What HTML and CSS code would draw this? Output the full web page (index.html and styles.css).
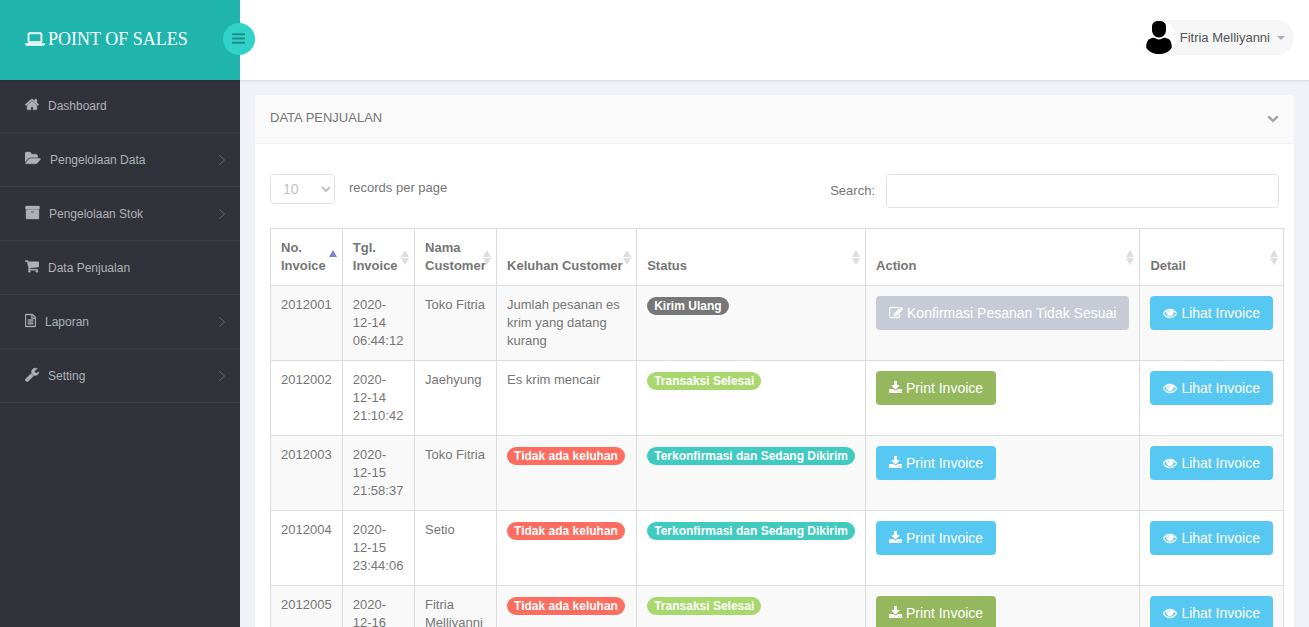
FILE: index.html
```html
<!DOCTYPE html>
<html lang="id">
<head>
  <meta charset="UTF-8" />
  <meta name="viewport" content="width=device-width, initial-scale=1" />
  <title>Point Of Sales - Data Penjualan</title>
  <link rel="stylesheet" href="styles.css">
</head>
<body>
  <!-- Icon set -->
  <svg class="icon-set" aria-hidden="true">
    <symbol id="laptop" viewBox="0 0 1920 1792"><path d="M416 1280q-66 0-113-47t-47-113v-704q0-66 47-113t113-47h1088q66 0 113 47t47 113v704q0 66-47 113t-113 47h-1088zm-32-864v704q0 13 9.500 22.500t22.500 9.500h1088q13 0 22.500-9.500t9.500-22.500v-704q0-13-9.500-22.500t-22.500-9.500h-1088q-13 0-22.500 9.500t-9.500 22.500zm1376 928h160v96q0 40-47 68t-113 28h-1600q-66 0-113-28t-47-68v-96h1760z"/></symbol>
    <symbol id="bars" viewBox="0 0 1792 1792"><path d="M1664 1344v128q0 26-19 45t-45 19h-1408q-26 0-45-19t-19-45v-128q0-26 19-45t45-19h1408q26 0 45 19t19 45zm0-512v128q0 26-19 45t-45 19h-1408q-26 0-45-19t-19-45v-128q0-26 19-45t45-19h1408q26 0 45 19t19 45zm0-512v128q0 26-19 45t-45 19h-1408q-26 0-45-19t-19-45v-128q0-26 19-45t45-19h1408q26 0 45 19t19 45z"/></symbol>
    <symbol id="home" viewBox="64 0 1664 1792"><path d="M1472 992v480q0 26-19 45t-45 19h-384v-384h-256v384h-384q-26 0-45-19t-19-45v-480q0-1 .5-3t.5-3l575-474 575 474q1 2 1 6zm223-69l-62 74q-8 9-21 11h-3q-13 0-21-7l-692-577-692 577q-12 8-24 7-13-2-21-11l-62-74q-8-10-7-23.500t11-21.500l719-599q32-26 76-26t76 26l244 204v-195q0-14 9-23t23-9h192q14 0 23 9t9 23v408l219 182q10 8 11 21.500t-7 23.500z"/></symbol>
    <symbol id="folder" viewBox="0 0 1815 1792"><path d="M1815 952q0 31-31 66l-336 396q-43 51-120.500 86.500t-143.500 35.500h-1088q-34 0-60.500-13t-26.500-43q0-31 31-66l336-396q43-51 120.500-86.500t143.500-35.500h1088q34 0 60.500 13t26.500 43zm-343-344v160h-832q-94 0-197 47.500t-164 119.500l-337 396-5 6q0-4-.5-12.500t-.5-12.500v-960q0-92 66-158t158-66h320q92 0 158 66t66 158v32h544q92 0 158 66t66 158z"/></symbol>
    <symbol id="archive" viewBox="64 0 1664 1792"><path d="M1088 832q0-26-19-45t-45-19h-256q-26 0-45 19t-19 45 19 45 45 19h256q26 0 45-19t19-45zm576-192v960q0 26-19 45t-45 19h-1408q-26 0-45-19t-19-45v-960q0-26 19-45t45-19h1408q26 0 45 19t19 45zm64-448v256q0 26-19 45t-45 19h-1536q-26 0-45-19t-19-45v-256q0-26 19-45t45-19h1536q26 0 45 19t19 45z"/></symbol>
    <symbol id="cart" viewBox="64 64 1664 1792"><path d="M704 1536q0 52-38 90t-90 38-90-38-38-90 38-90 90-38 90 38 38 90zm896 0q0 52-38 90t-90 38-90-38-38-90 38-90 90-38 90 38 38 90zm128-1088v512q0 24-16.500 42.500t-40.500 21.500l-1044 122q13 60 13 70 0 16-24 64h920q26 0 45 19t19 45-19 45-45 19h-1024q-26 0-45-19t-19-45q0-11 8-31.500t16-36 21.500-40 15.500-29.500l-177-823h-204q-26 0-45-19t-19-45 19-45 45-19h256q16 0 28.500 6.500t19.500 15.500 13 24.500 8 26 5.500 29.500 4.500 26h1201q26 0 45 19t19 45z"/></symbol>
    <symbol id="file" viewBox="128 0 1536 1792"><path d="M1596 380q28 28 48 76t20 88v1152q0 40-28 68t-68 28h-1344q-40 0-68-28t-28-68v-1600q0-40 28-68t68-28h896q40 0 88 20t76 48zm-444-244v376h376q-10-29-22-41l-313-313q-12-12-41-22zm384 1528v-1024h-416q-40 0-68-28t-28-68v-416h-768v1536h1280zm-1024-864q0-14 9-23t23-9h704q14 0 23 9t9 23v64q0 14-9 23t-23 9h-704q-14 0-23-9t-9-23v-64zm736 224q14 0 23 9t9 23v64q0 14-9 23t-23 9h-704q-14 0-23-9t-9-23v-64q0-14 9-23t23-9h704zm0 256q14 0 23 9t9 23v64q0 14-9 23t-23 9h-704q-14 0-23-9t-9-23v-64q0-14 9-23t23-9h704z"/></symbol>
    <symbol id="wrench" viewBox="64 0 1664 1792"><path d="M448 1472q0-26-19-45t-45-19-45 19-19 45 19 45 45 19 45-19 19-45zm644-420l-682 682q-37 37-90 37-52 0-91-37l-106-108q-38-36-38-90 0-53 38-91l681-681q39 98 114.500 173.500t173.500 114.500zm634-435q0 39-23 106-47 134-164.500 217.500t-258.500 83.500q-185 0-316.500-131.500t-131.500-316.500 131.500-316.500 316.500-131.500q58 0 121.500 16.500t107.500 46.500q16 11 16 28t-16 28l-293 169v224l193 107q5-3 79-48.500t135.500-81 70.500-35.500q15 0 23.500 10t8.500 25z"/></symbol>
    <symbol id="eye" viewBox="0 0 1792 1792"><path d="M1664 960q-152-236-381-353 61 104 61 225 0 185-131.500 316.500t-316.500 131.500-316.500-131.500-131.500-316.500q0-121 61-225-229 117-381 353 133 205 333.500 326.500t434.500 121.500 434.500-121.500 333.500-326.500zm-720-384q0-20-14-34t-34-14q-125 0-214.500 89.500t-89.500 214.500q0 20 14 34t34 14 34-14 14-34q0-86 61-147t147-61q20 0 34-14t14-34zm848 384q0 34-20 69-140 230-376.500 368.500t-499.500 138.500-499.500-139-376.500-368q-20-35-20-69t20-69q140-229 376.500-368t499.500-139 499.500 139 376.500 368q20 35 20 69z"/></symbol>
    <symbol id="download" viewBox="64 0 1664 1792"><path d="M1344 1344q0-26-19-45t-45-19-45 19-19 45 19 45 45 19 45-19 19-45zm256 0q0-26-19-45t-45-19-45 19-19 45 19 45 45 19 45-19 19-45zm128-224v320q0 40-28 68t-68 28h-1472q-40 0-68-28t-28-68v-320q0-40 28-68t68-28h465l135 136q58 56 136 56t136-56l136-136h464q40 0 68 28t28 68zm-325-569q17 41-14 70l-448 448q-18 19-45 19t-45-19l-448-448q-31-29-14-70 17-39 59-39h256v-448q0-26 19-45t45-19h256q26 0 45 19t19 45v448h256q42 0 59 39z"/></symbol>
    <symbol id="edit" viewBox="0 0 1792 1792"><path d="M888 1184l116-116-152-152-116 116v56h96v96h56zm440-720q-16-16-33 1l-350 350q-17 17-1 33t33-1l350-350q17-17 1-33zm80 594v190q0 119-84.500 203.500t-203.500 84.500h-832q-119 0-203.500-84.500t-84.500-203.500v-832q0-119 84.500-203.500t203.500-84.500h832q63 0 117 25 15 7 18 23 3 17-9 29l-49 49q-14 14-32 8-23-6-45-6h-832q-66 0-113 47t-47 113v832q0 66 47 113t113 47h832q66 0 113-47t47-113v-126q0-13 9-22l64-64q15-15 35-7t20 29zm-96-738l288 288-672 672h-288v-288zm444 132l-92 92-288-288 92-92q28-28 68-28t68 28l152 152q28 28 28 68t-28 68z"/></symbol>
    <symbol id="chevron" viewBox="0 0 1792 1792"><path d="M1683 808l-742 741q-19 19-45 19t-45-19l-742-741q-19-19-19-45.500t19-45.500l166-165q19-19 45-19t45 19l531 531 531-531q19-19 45-19t45 19l166 165q19 19 19 45.500t-19 45.500z"/></symbol>
    <symbol id="angle" viewBox="0 0 6 10"><path d="M.5 .5l5 4.500-5 4.500" fill="none" stroke="currentColor" stroke-width=".8"/></symbol>
  </svg>

  <header class="header">
    <div class="brand">
      <a href="#" class="logo"><svg class="icon-logo bold"><use href="#laptop"/></svg>POINT OF SALES</a>
      <button type="button" class="toggle" aria-label="Menu"><svg class="icon-bars"><use href="#bars"/></svg></button>
    </div>
    <button type="button" class="user">
      <svg class="avatar" viewBox="0 0 34 34">
        <circle cx="17" cy="17" r="17" fill="#fff"/>
        <path d="M17 1c4.500 0 7 2 7 5.500v3.500c0 4-3 7.500-7 7.500s-7-3.500-7-7.500V6.500C10 3 12.500 1 17 1z"/>
        <path d="M10 18c1.500-.6 2.600-.3 4 .6 2 1.200 4 1.200 6 0 1.400-.9 2.500-1.200 4-.6 4 1 5.800 3.500 5.800 9.500C27 32.300 22 34 17 34S7 32.300 4.200 27.500C4.200 21.500 6 19 10 18z"/>
      </svg>
      <span>Fitria Melliyanni</span>
      <i class="caret"></i>
    </button>
  </header>

  <div class="page">
    <nav class="sidebar">
      <ul>
        <li><a href="#"><svg class="icon bold w14"><use href="#home"/></svg><span>Dashboard</span></a></li>
        <li><a href="#"><svg class="icon bold w16"><use href="#folder"/></svg><span>Pengelolaan Data</span><svg class="arrow"><use href="#angle"/></svg></a></li>
        <li><a href="#"><svg class="icon bold w15"><use href="#archive"/></svg><span>Pengelolaan Stok</span><svg class="arrow"><use href="#angle"/></svg></a></li>
        <li><a href="#"><svg class="icon bold w14"><use href="#cart"/></svg><span>Data Penjualan</span></a></li>
        <li><a href="#"><svg class="icon bold w11"><use href="#file"/></svg><span>Laporan</span><svg class="arrow"><use href="#angle"/></svg></a></li>
        <li><a href="#"><svg class="icon bold w14"><use href="#wrench"/></svg><span>Setting</span><svg class="arrow"><use href="#angle"/></svg></a></li>
      </ul>
    </nav>

    <main>
      <section class="panel">
        <div class="panel-heading">
          <h1>DATA PENJUALAN</h1>
          <button type="button" class="collapse" aria-label="Collapse"><svg class="icon-chevron"><use href="#chevron"/></svg></button>
        </div>
        <div class="panel-body">
          <div class="controls">
            <div class="length">
              <select id="length">
                <option>10</option>
                <option>25</option>
                <option>50</option>
              </select>
              <label for="length">records per page</label>
            </div>
            <div class="search">
              <label for="search">Search:</label>
              <input type="text" id="search" />
            </div>
          </div>

          <table>
            <thead>
              <tr>
                <th class="asc">No. Invoice</th>
                <th>Tgl. Invoice</th>
                <th>Nama Customer</th>
                <th class="nowrap">Keluhan Customer</th>
                <th>Status</th>
                <th>Action</th>
                <th>Detail</th>
              </tr>
            </thead>
            <tbody>
              <tr>
                <td>2012001</td>
                <td>2020-12-14 06:44:12</td>
                <td>Toko Fitria</td>
                <td>Jumlah pesanan es krim yang datang kurang</td>
                <td><span class="badge">Kirim Ulang</span></td>
                <td><button type="button" class="btn gray" disabled><svg class="bold w14"><use href="#edit"/></svg>Konfirmasi Pesanan Tidak Sesuai</button></td>
                <td><a href="#" class="btn info"><svg class="bold w14"><use href="#eye"/></svg>Lihat Invoice</a></td>
              </tr>
              <tr>
                <td>2012002</td>
                <td>2020-12-14 21:10:42</td>
                <td>Jaehyung</td>
                <td>Es krim mencair</td>
                <td><span class="badge success">Transaksi Selesai</span></td>
                <td><a href="#" class="btn green"><svg class="w13"><use href="#download"/></svg>Print Invoice</a></td>
                <td><a href="#" class="btn info"><svg class="bold w14"><use href="#eye"/></svg>Lihat Invoice</a></td>
              </tr>
              <tr>
                <td>2012003</td>
                <td>2020-12-15 21:58:37</td>
                <td>Toko Fitria</td>
                <td><span class="badge danger">Tidak ada keluhan</span></td>
                <td><span class="badge primary">Terkonfirmasi dan Sedang Dikirim</span></td>
                <td><a href="#" class="btn info"><svg class="w13"><use href="#download"/></svg>Print Invoice</a></td>
                <td><a href="#" class="btn info"><svg class="bold w14"><use href="#eye"/></svg>Lihat Invoice</a></td>
              </tr>
              <tr>
                <td>2012004</td>
                <td>2020-12-15 23:44:06</td>
                <td>Setio</td>
                <td><span class="badge danger">Tidak ada keluhan</span></td>
                <td><span class="badge primary">Terkonfirmasi dan Sedang Dikirim</span></td>
                <td><a href="#" class="btn info"><svg class="w13"><use href="#download"/></svg>Print Invoice</a></td>
                <td><a href="#" class="btn info"><svg class="bold w14"><use href="#eye"/></svg>Lihat Invoice</a></td>
              </tr>
              <tr>
                <td>2012005</td>
                <td>2020-12-16</td>
                <td>Fitria Melliyanni</td>
                <td><span class="badge danger">Tidak ada keluhan</span></td>
                <td><span class="badge success">Transaksi Selesai</span></td>
                <td><a href="#" class="btn green"><svg class="w13"><use href="#download"/></svg>Print Invoice</a></td>
                <td><a href="#" class="btn info"><svg class="bold w14"><use href="#eye"/></svg>Lihat Invoice</a></td>
              </tr>
            </tbody>
          </table>
        </div>
      </section>
    </main>
  </div>
</body>
</html>
```
FILE: styles.css
```css
* {
  box-sizing: border-box;
}

body {
  display: flex;
  flex-direction: column;
  height: 100vh;
  margin: 0;
  overflow: hidden;
  background: #f1f2f7;
  color: #767676;
  font-family: "Liberation Sans", Arial, sans-serif;
  font-size: 13px;
  line-height: 18px;
}

a {
  text-decoration: none;
}

button {
  border: none;
  font-family: inherit;
  cursor: pointer;
}

svg {
  flex: none;
  fill: currentColor;
}

.icon-set {
  display: none;
}

.bold {
  stroke: currentColor;
  stroke-width: 50px;
}

.w11 { width: 11px; }
.w13 { width: 13px; }
.w14 { width: 14px; }
.w15 { width: 15px; }
.w16 { width: 16px; }

/* Header */
.header {
  display: flex;
  flex: none;
  align-items: center;
  justify-content: space-between;
  height: 80px;
  padding-right: 15px;
  background: #fff;
  box-shadow: 0 1px 2px rgba(0, 0, 0, 0.12);
  position: relative;
  z-index: 1;
}

.brand {
  display: flex;
  align-items: center;
  width: 240px;
  height: 80px;
  padding: 0 0 2px 25px;
  background: #1fb5ad;
  position: relative;
}

.logo {
  display: flex;
  align-items: center;
  gap: 3px;
  color: #fff;
  font-family: "Liberation Serif", "Times New Roman", serif;
  font-size: 18px;
}

.icon-logo {
  width: 20px;
  height: 18px;
}

.toggle {
  display: flex;
  align-items: center;
  justify-content: center;
  width: 32px;
  height: 32px;
  padding: 0 1px 1px 0;
  border-radius: 50%;
  background: #32d2c9;
  color: #1c8d86;
  position: absolute;
  top: 23px;
  right: -15px;
}

.icon-bars {
  width: 15px;
  height: 15px;
}

.user {
  display: flex;
  align-items: center;
  height: 35px;
  margin-bottom: 5px;
  padding: 0 9px 0 0;
  border-radius: 100px;
  background: #f6f6f6;
  color: #555;
  font-size: 13px;
}

.avatar {
  align-self: flex-start;
  width: 34px;
  height: 34px;
  margin-right: 4px;
  fill: #000;
}

.caret {
  margin-left: 7px;
  border-top: 4px solid #a9afc4;
  border-left: 4px solid transparent;
  border-right: 4px solid transparent;
}

/* Sidebar */
.page {
  display: flex;
  flex: 1;
  min-height: 0;
}

.sidebar {
  flex: none;
  width: 240px;
  background: #32323a;
}

.sidebar ul {
  margin: -1px 0 0;
  padding: 0;
  list-style: none;
}

.sidebar a {
  display: flex;
  align-items: center;
  gap: 9px;
  height: 54px;
  padding: 0 15px 0 25px;
  border-bottom: 1px solid #3d3d47;
  color: #aeb2b7;
  font-size: 12px;
}

.icon {
  height: 15px;
  margin-bottom: 2px;
}

.arrow {
  width: 6px;
  height: 10px;
  margin-left: auto;
  color: #7c7c80;
}

/* Panel */
main {
  flex: 1;
  min-width: 0;
  padding: 15px;
}

.panel {
  border-radius: 4px;
  background: #fff;
}

.panel-heading {
  display: flex;
  align-items: center;
  justify-content: space-between;
  padding: 14px 15px 16px;
  border-bottom: 1px solid #eff2f7;
  border-radius: 4px 4px 0 0;
  background: #fafafa;
}

.panel-heading h1 {
  margin: 0;
  font-size: 13px;
  font-weight: 400;
}

.collapse {
  padding: 0;
  background: none;
  color: #a2a2a2;
}

.icon-chevron {
  display: block;
  width: 12px;
  height: 12px;
}

.panel-body {
  padding: 30px 15px 15px;
}

.controls {
  display: flex;
  align-items: flex-start;
  justify-content: space-between;
  margin-bottom: 20px;
}

.length {
  display: flex;
  align-items: center;
  gap: 14px;
}

.length label {
  padding-bottom: 2px;
}

.length select {
  width: 65px;
  height: 30px;
  padding: 0 0 0 8px;
  border: 1px solid #e2e2e4;
  border-radius: 4px;
  background: #fff;
  color: #c2c2c2;
  font-family: inherit;
  font-size: 14px;
}

.search {
  display: flex;
  align-items: center;
  gap: 11px;
}

.search input {
  width: 393px;
  height: 34px;
  padding: 6px 12px;
  border: 1px solid #e2e2e4;
  border-radius: 4px;
}

/* Table */
table {
  width: calc(100% + 5px);
  border-collapse: collapse;
}

th, td {
  padding: 10px;
  border: 1px solid #ddd;
  text-align: left;
  vertical-align: top;
}

th {
  vertical-align: bottom;
  position: relative;
}

th::before,
th::after {
  content: "";
  border: 4px solid transparent;
  position: absolute;
  right: 5px;
}

th::before {
  top: 21px;
  border-top: none;
  border-bottom: 7px solid #ddd;
}

th::after {
  top: 29px;
  border-bottom: none;
  border-top: 7px solid #ddd;
}

th.asc::before {
  border-bottom-color: #7a7fe0;
}

th.asc::after {
  display: none;
}

.nowrap {
  white-space: nowrap;
}

tbody tr:nth-child(odd) {
  background: #f9f9f9;
}

.badge {
  display: inline-block;
  margin-top: 1px;
  padding: 3px 7px;
  border-radius: 10px;
  background: #777;
  color: #fff;
  font-size: 12px;
  font-weight: bold;
  line-height: 12px;
  white-space: nowrap;
}

.badge.success { background: #a9d86e; }
.badge.danger { background: #ff6c60; }
.badge.primary { background: #41cac0; }

.btn {
  display: inline-flex;
  align-items: center;
  gap: 4px;
  height: 34px;
  padding: 0 13px;
  border-radius: 4px;
  color: #fff;
  font-size: 14px;
  white-space: nowrap;
}

.btn svg {
  height: 14px;
}

.btn.gray { background: #c7cbd6; }
.btn.green { background: #95b75d; }
.btn.info { background: #57c8f2; }
```
